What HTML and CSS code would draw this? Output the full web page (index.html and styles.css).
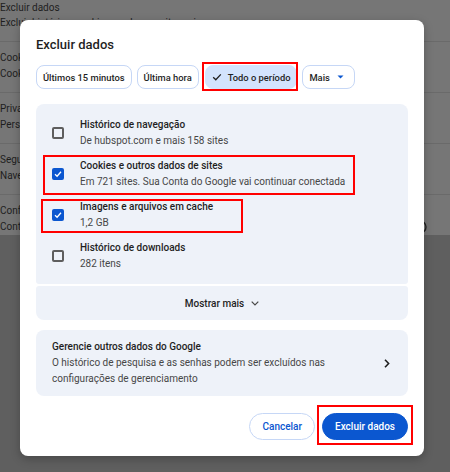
FILE: index.html
```html
<!DOCTYPE html>
<html>

<head>
	<meta charset="utf-8" />
	<title>Excluir dados</title>
	<meta name="viewport" content="width=device-width, initial-scale=1" />
	<link rel="stylesheet" href="styles.css">
</head>

<body>
	<main class="settings">
		<div class="srow first">
			<div class="s-title">Excluir dados</div>
			<div class="s-sub">Excluir histórico, cookies, cache e muito mais</div>
		</div>
		<div class="srow">
			<div class="s-text">
				<div class="s-title">Cookies de terceiros</div>
				<div class="s-sub">Cookies de terceiros são bloqueados</div>
			</div>
		</div>
		<div class="srow">
			<div class="s-text">
				<div class="s-title">Privacidade de anúncios</div>
				<div class="s-sub">Personalize as informações</div>
			</div>
		</div>
		<div class="srow">
			<div class="s-text">
				<div class="s-title">Segurança</div>
				<div class="s-sub">Navegação segura</div>
			</div>
		</div>
		<div class="srow last">
			<div class="s-text">
				<div class="s-title">Configurações do site</div>
				<div class="s-sub">Controla quais informações</div>
			</div>
			<svg class="s-icon" width="16" height="16" viewBox="0 0 16 16"><circle cx="8" cy="8" r="6" fill="none" stroke="#222" stroke-width="1.4"/></svg>
		</div>
	</main>

	<section class="dialog">
		<h2 class="dialog-title">Excluir dados</h2>

		<div class="chips">
			<div class="chip">Últimos 15 minutos</div>
			<div class="chip">Última hora</div>
			<div class="chip selected">
				<svg class="chip-check" width="10" height="10" viewBox="0 0 10 10"><path d="M1.2 5.3 L3.8 7.8 L8.8 2.4" fill="none" stroke="#1f1f1f" stroke-width="1.3"/></svg>
				Todo o período
				<span class="mark mark-chip"></span>
			</div>
			<div class="chip">
				Mais
				<svg class="chip-caret" width="7" height="4" viewBox="0 0 7 4"><path d="M0.5 0.5 H6.5 L3.5 3.5 Z" fill="#0b57d0"/></svg>
			</div>
		</div>

		<div class="panel list">
			<div class="item">
				<span class="box"></span>
				<div>
					<div class="item-title">Histórico de navegação</div>
					<div class="item-sub">De hubspot.com e mais 158 sites</div>
				</div>
			</div>
			<div class="item">
				<span class="box checked">
					<svg width="8" height="8" viewBox="0 0 8 8"><path d="M1 4.2 L3.1 6.2 L7 1.8" fill="none" stroke="#fff" stroke-width="1.3"/></svg>
				</span>
				<div>
					<div class="item-title">Cookies e outros dados de sites</div>
					<div class="item-sub">Em 721 sites. Sua Conta do Google vai continuar conectada</div>
				</div>
				<span class="mark mark-cookies"></span>
			</div>
			<div class="item">
				<span class="box checked">
					<svg width="8" height="8" viewBox="0 0 8 8"><path d="M1 4.2 L3.1 6.2 L7 1.8" fill="none" stroke="#fff" stroke-width="1.3"/></svg>
				</span>
				<div>
					<div class="item-title">Imagens e arquivos em cache</div>
					<div class="item-sub">1,2 GB</div>
				</div>
				<span class="mark mark-cache"></span>
			</div>
			<div class="item">
				<span class="box"></span>
				<div>
					<div class="item-title">Histórico de downloads</div>
					<div class="item-sub">282 itens</div>
				</div>
			</div>
		</div>

		<div class="panel more">
			Mostrar mais
			<svg class="more-chevron" width="8" height="5" viewBox="0 0 8 5"><path d="M0.7 0.7 L4 4 L7.3 0.7" fill="none" stroke="#474747" stroke-width="1.2"/></svg>
		</div>

		<div class="panel manage">
			<div class="manage-text">
				<div class="item-title">Gerencie outros dados do Google</div>
				<div class="item-sub">O histórico de pesquisa e as senhas podem ser excluídos nas configurações de gerenciamento</div>
			</div>
			<svg class="manage-chevron" width="6" height="9" viewBox="0 0 6 9"><path d="M1 0.8 L4.6 4.5 L1 8.2" fill="none" stroke="#1f1f1f" stroke-width="1.6"/></svg>
		</div>

		<div class="actions">
			<button class="btn btn-outline">Cancelar</button>
			<span class="btn-wrap">
				<button class="btn btn-primary">Excluir dados</button>
				<span class="mark mark-btn"></span>
			</span>
		</div>
	</section>
</body>

</html>
```

FILE: styles.css
```css
html,
body {
	margin: 0;
	height: 100%;
}

body {
	background: #5f5f5f;
	font-family: Roboto, "Noto Sans", sans-serif;
	overflow: hidden;
}

/* dimmed settings page behind the dialog */
.settings {
	background: #767676;
	color: #1e1e1e;
	font-size: 10px;
}

.srow {
	padding: 8px 0 10px;
	border-top: 1px solid #6a6a6a;
	line-height: 16px;
	white-space: nowrap;
}

.srow.first {
	border-top: 0;
	padding: 0 0 11px;
	line-height: 15px;
}

.srow.last {
	padding-bottom: 0;
	display: flex;
	align-items: flex-end;
	justify-content: space-between;
}

/* only the left edge shows past the dialog */
.s-text {
	width: 20px;
	overflow: hidden;
}

.s-icon {
	margin: 0 22px 0 0;
}

/* dialog */
.dialog {
	position: absolute;
	left: 20px;
	top: 20px;
	width: 404px;
	height: 436px;
	box-sizing: border-box;
	padding: 16px;
	background: #fff;
	border-radius: 8px;
	box-shadow: 0 3px 10px rgba(0, 0, 0, 0.25);
	color: #1f1f1f;
	display: flex;
	flex-direction: column;
}

.dialog-title {
	margin: 0;
	font-size: 13px;
	font-weight: 500;
	line-height: 18px;
}

.chips {
	display: flex;
	gap: 5px;
	margin-top: 11px;
}

.chip {
	height: 24px;
	box-sizing: border-box;
	border: 1px solid #c6d7f6;
	border-radius: 8px;
	padding: 0 6px;
	display: flex;
	align-items: center;
	font-size: 9.35px;
	font-weight: 500;
	background: #fff;
}

.chip.selected {
	position: relative;
	background: #d3e3fd;
	border-color: #d3e3fd;
	margin-left: 1px;
}

.chip-check {
	margin: 0 6px 0 0;
}

.chip-caret {
	margin: 0 4px 0 7px;
}

.panel {
	background: #eef2f9;
}

.list {
	margin-top: 15px;
	padding: 8px 0;
	border-radius: 8px 8px 3px 3px;
}

.item {
	position: relative;
	display: flex;
	align-items: center;
	height: 41px;
	padding-left: 16px;
}

.box {
	width: 12px;
	height: 12px;
	box-sizing: border-box;
	border: 2px solid #5e5e5e;
	border-radius: 2px;
	margin-right: 16px;
	display: flex;
	align-items: center;
	justify-content: center;
	flex: none;
}

.box.checked {
	background: #0b57d0;
	border-color: #0b57d0;
}

.item-title {
	font-size: 10px;
	font-weight: 500;
	line-height: 16px;
}

.item-sub {
	font-size: 10px;
	line-height: 16px;
	color: #474747;
}

/* red annotation frames */
.mark {
	position: absolute;
	box-sizing: border-box;
	border: 2px solid #f00;
	pointer-events: none;
}

.mark-chip {
	top: -4px;
	bottom: -3px;
	left: -4px;
	right: -2px;
}

.mark-cookies {
	left: 7px;
	top: 2px;
	bottom: -1px;
	width: 312px;
}

.mark-cache {
	left: 5px;
	top: 5px;
	bottom: 2px;
	width: 202px;
}

.more {
	margin-top: 2px;
	height: 34px;
	border-radius: 3px 3px 8px 8px;
	display: flex;
	align-items: center;
	justify-content: center;
	font-size: 10px;
	font-weight: 500;
}

.more-chevron {
	margin-left: 7px;
}

.manage {
	margin-top: 10px;
	padding: 9px 18px 9px 16px;
	border-radius: 8px;
	display: flex;
	align-items: center;
}

.manage-text {
	flex: 1;
	margin-right: 24px;
}

.actions {
	margin-top: auto;
	display: flex;
	justify-content: flex-end;
	gap: 7px;
}

.btn-wrap {
	position: relative;
	display: flex;
}

.btn {
	height: 27px;
	box-sizing: border-box;
	border-radius: 14px;
	padding: 0 12px;
	font-family: inherit;
	font-size: 10px;
	font-weight: 500;
	cursor: pointer;
}

.btn-outline {
	border: 1px solid #c6d7f6;
	background: #fff;
	color: #0b57d0;
}

.btn-primary {
	border: 1px solid #0b57d0;
	background: #0b57d0;
	color: #fff;
}

.mark-btn {
	top: -8px;
	bottom: -5px;
	left: -5px;
	right: -5px;
}
```
